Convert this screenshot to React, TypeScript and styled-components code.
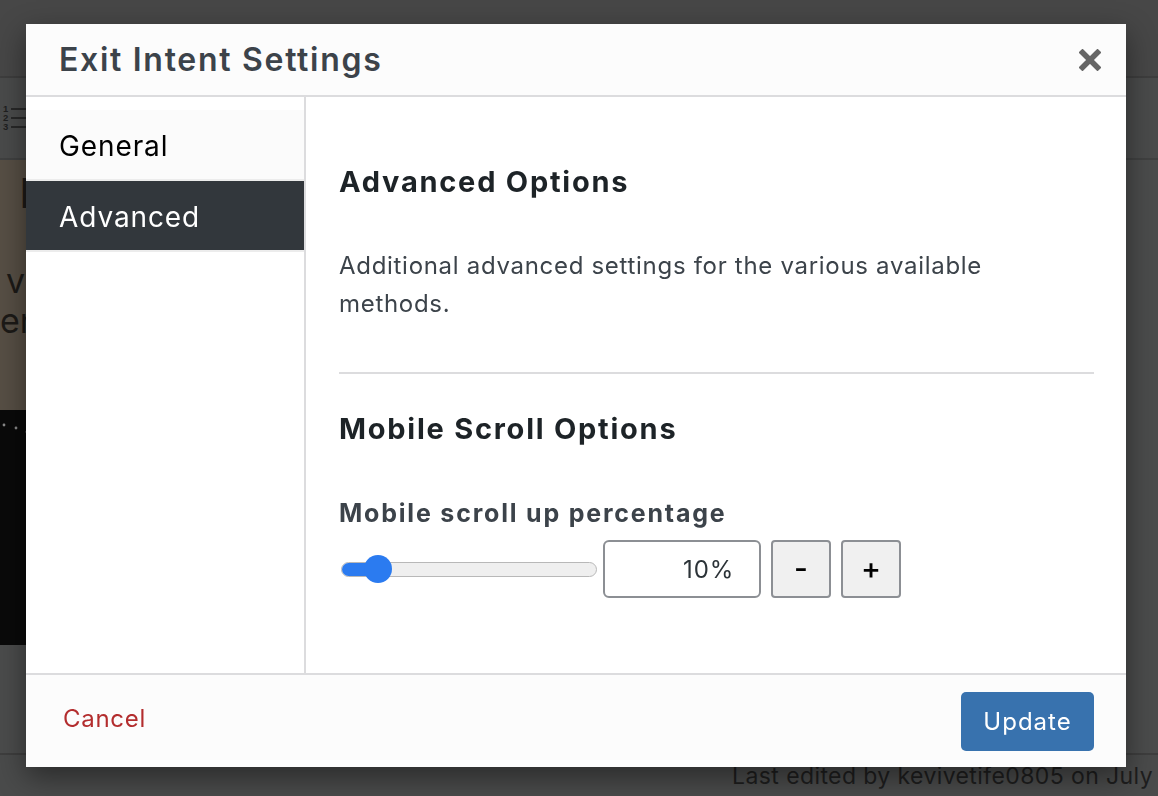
import styled, { createGlobalStyle } from 'styled-components';

const GlobalStyle = createGlobalStyle`
  html, body {
    margin: 0;
    padding: 0;
    height: 100%;
    overflow: hidden;
  }
  body {
    background: #4b4b4b;
    font-family: Inter, "Open Sans", "Liberation Sans", sans-serif;
  }
  * {
    box-sizing: border-box;
  }
`;

const ListGlyph = () => (
  <svg width="28" height="28" viewBox="0 0 28 28">
    <g fill="#202020" fontFamily="Liberation Sans, sans-serif" fontSize="9.5" fontWeight="700">
      <text x="2" y="8">1</text>
      <text x="2" y="17">2</text>
      <text x="2" y="26">3</text>
    </g>
    <g stroke="#202020" strokeWidth="1.6">
      <line x1="10" y1="5" x2="28" y2="5" />
      <line x1="10" y1="14" x2="28" y2="14" />
      <line x1="10" y1="23" x2="28" y2="23" />
    </g>
  </svg>
);

const Dots = () => (
  <svg width="30" height="20" viewBox="0 0 30 20">
    <g fill="#8a8a8a">
      <circle cx="4" cy="5" r="1.4" />
      <circle cx="16" cy="8" r="1.4" />
      <circle cx="27" cy="12" r="1.4" />
    </g>
  </svg>
);

const CloseIcon = () => (
  <svg width="22" height="22" viewBox="0 0 22 22">
    <g stroke="#666" strokeWidth="5.5" strokeLinecap="square">
      <line x1="3.5" y1="3.5" x2="18.5" y2="18.5" />
      <line x1="18.5" y1="3.5" x2="3.5" y2="18.5" />
    </g>
  </svg>
);

const Page = styled.div`
  height: 796px;
  display: flex;
  flex-direction: column;
`;

const TopBar = styled.div`
  height: 78px;
  flex: none;
  background: #474747;
  border-bottom: 2px solid #3e3e3e;
`;

const Toolbar = styled.div`
  height: 82px;
  flex: none;
  display: flex;
  align-items: center;
  padding-left: 1px;
  background: #4a4b4b;
  border-bottom: 2px solid #404141;
`;

const Workspace = styled.div`
  flex: 1;
  display: flex;
  background: #4b4c4c;
`;

const Canvas = styled.div`
  width: 320px;
  display: flex;
  flex-direction: column;
  overflow: hidden;
`;

const CoverBlock = styled.div`
  height: 250px;
  background: #574f45;
  color: #1c1a17;
  padding-top: 12px;
`;

const CoverHeading = styled.div`
  font-size: 40px;
  line-height: 44px;
  padding-left: 20px;
  font-family: "Liberation Sans", sans-serif;
`;

const CoverLine = styled.div<{ $indent: number; $top?: number }>`
  font-size: 34px;
  line-height: 40px;
  margin-top: ${(p) => p.$top ?? 0}px;
  padding-left: ${(p) => p.$indent}px;
  white-space: nowrap;
`;

const ImageBlock = styled.div`
  height: 235px;
  background: #0a0a0a;
  padding-top: 10px;
`;

const StatusBar = styled.div`
  height: 43px;
  flex: none;
  display: flex;
  align-items: center;
  justify-content: flex-end;
  padding-right: 5px;
  background: #4a4b4b;
  border-top: 2px solid #3e3e3e;
  color: #1e1e1e;
  font-size: 23px;
  letter-spacing: 0.4px;
  white-space: nowrap;
`;

const Modal = styled.div`
  position: fixed;
  top: 24px;
  left: 26px;
  width: 1100px;
  height: 743px;
  display: flex;
  flex-direction: column;
  background: #fff;
  box-shadow: 0 10px 28px rgba(0, 0, 0, 0.45);
`;

const Header = styled.div`
  height: 73px;
  flex: none;
  display: flex;
  align-items: center;
  justify-content: space-between;
  padding: 0 25px 0 33px;
  background: #fcfcfc;
  border-bottom: 2px solid #dcdcde;
`;

const Title = styled.h1`
  margin: 0;
  font-size: 32px;
  font-weight: 600;
  color: #3c434a;
  letter-spacing: 1.7px;
`;

const CloseButton = styled.button`
  border: 0;
  padding: 0;
  background: none;
  display: flex;
  cursor: pointer;
`;

const Main = styled.div`
  flex: 1;
  display: flex;
  min-height: 0;
`;

const Sidebar = styled.nav`
  width: 280px;
  flex: none;
  padding-top: 13px;
  border-right: 2px solid #dcdcde;
`;

const Tab = styled.div<{ $active?: boolean }>`
  height: 71px;
  display: flex;
  align-items: center;
  padding: 3px 0 0 33px;
  font-size: 28px;
  letter-spacing: 0.9px;
  background: ${(p) => (p.$active ? '#32373c' : '#fbfbfb')};
  color: ${(p) => (p.$active ? '#fff' : '#000')};
  border-bottom: 2px solid #ececec;
`;

const Content = styled.section`
  flex: 1;
  padding: 0 32px 0 33px;
`;

const SectionTitle = styled.h2<{ $top: number }>`
  margin: ${(p) => p.$top}px 0 0;
  font-size: 29px;
  line-height: 36px;
  font-weight: 700;
  color: #1d2327;
  letter-spacing: 1.75px;
`;

const Description = styled.p`
  margin: 47px 0 0;
  font-size: 24px;
  line-height: 38px;
  color: #3c434a;
  letter-spacing: 0.7px;
  max-width: 700px;
`;

const Divider = styled.hr`
  margin: 49px 0 0;
  border: 0;
  border-top: 2px solid #dcdcde;
`;

const FieldLabel = styled.div`
  margin-top: 50px;
  font-size: 25px;
  line-height: 32px;
  font-weight: 700;
  color: #3c434a;
  letter-spacing: 1.8px;
`;

const ControlRow = styled.div`
  margin-top: 11px;
  display: flex;
  align-items: center;
  gap: 10px;
`;

const Slider = styled.div`
  position: relative;
  width: 258px;
  height: 58px;
  margin-right: -4px;
  display: flex;
  align-items: center;
  padding-left: 2px;
`;

const Track = styled.div`
  width: 256px;
  height: 15px;
  border-radius: 8px;
  background: #efefef;
  border: 1px solid #b8b8b8;
  overflow: hidden;
`;

const Fill = styled.div`
  height: 100%;
  background: #2b7bf0;
`;

const Thumb = styled.div`
  position: absolute;
  top: 15px;
  width: 28px;
  height: 28px;
  border-radius: 50%;
  background: #2b7bf0;
`;

const ValueInput = styled.div`
  width: 158px;
  height: 58px;
  display: flex;
  align-items: center;
  justify-content: flex-end;
  padding-right: 25px;
  border: 2px solid #8c8f94;
  border-radius: 6px;
  font-size: 24px;
  letter-spacing: 0.8px;
  color: #2c3338;
  background: #fff;
`;

const StepButton = styled.button`
  width: 60px;
  height: 58px;
  display: flex;
  align-items: center;
  justify-content: center;
  padding: 0 0 3px;
  border: 2px solid #8c8f94;
  border-radius: 4px;
  background: #f0f0f0;
  font-family: inherit;
  font-size: 30px;
  font-weight: 500;
  color: #000;
`;

const Footer = styled.div`
  height: 94px;
  flex: none;
  display: flex;
  align-items: center;
  justify-content: space-between;
  padding: 0 32px 0 37px;
  background: #fcfcfc;
  border-top: 2px solid #dcdcde;
`;

const CancelLink = styled.a`
  font-size: 24px;
  letter-spacing: 0.7px;
  color: #b32d2e;
  text-decoration: none;
  margin-top: -6px;
`;

const PrimaryButton = styled.button`
  width: 133px;
  height: 59px;
  border: 0;
  border-radius: 5px;
  background: #3872ae;
  color: #fff;
  font-family: inherit;
  font-size: 24px;
  letter-spacing: 1px;
`;

const value = 10;
const trackWidth = 256;
const thumbSize = 28;

export default function App() {
  const thumbLeft = 2 + (trackWidth - thumbSize) * (value / 100);

  return (
    <>
      <GlobalStyle />
      <Page>
        <TopBar />
        <Toolbar>
          <ListGlyph />
        </Toolbar>
        <Workspace>
          <Canvas>
            <CoverBlock>
              <CoverHeading>l</CoverHeading>
              <CoverLine $indent={6} $top={45}>v</CoverLine>
              <CoverLine $indent={0}>ent</CoverLine>
            </CoverBlock>
            <ImageBlock>
              <Dots />
            </ImageBlock>
          </Canvas>
        </Workspace>
        <StatusBar>Last edited by kevivetife0805 on July</StatusBar>
      </Page>

      <Modal>
        <Header>
          <Title>Exit Intent Settings</Title>
          <CloseButton aria-label="Close">
            <CloseIcon />
          </CloseButton>
        </Header>
        <Main>
          <Sidebar>
            <Tab>General</Tab>
            <Tab $active>Advanced</Tab>
          </Sidebar>
          <Content>
            <SectionTitle $top={67}>Advanced Options</SectionTitle>
            <Description>
              Additional advanced settings for the various available methods.
            </Description>
            <Divider />
            <SectionTitle $top={37}>Mobile Scroll Options</SectionTitle>
            <FieldLabel>Mobile scroll up percentage</FieldLabel>
            <ControlRow>
              <Slider>
                <Track>
                  <Fill style={{ width: thumbLeft + thumbSize / 2 - 2 }} />
                </Track>
                <Thumb style={{ left: thumbLeft }} />
              </Slider>
              <ValueInput>{value}%</ValueInput>
              <StepButton>-</StepButton>
              <StepButton>+</StepButton>
            </ControlRow>
          </Content>
        </Main>
        <Footer>
          <CancelLink>Cancel</CancelLink>
          <PrimaryButton>Update</PrimaryButton>
        </Footer>
      </Modal>
    </>
  );
}
